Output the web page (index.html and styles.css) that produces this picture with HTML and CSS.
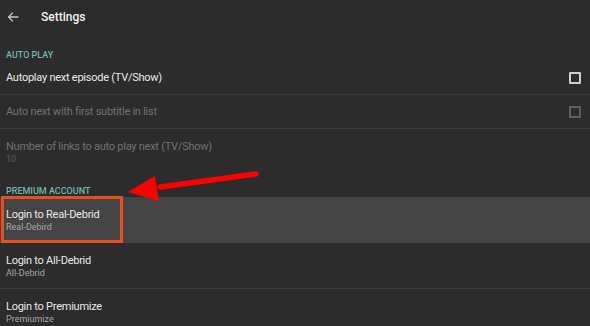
FILE: index.html
```html
<!DOCTYPE html>
<html>
<head>
<meta charset="utf-8">
<link rel="stylesheet" href="styles.css">
</head>
<body>
<div class="screen">
  <header class="topbar">
    <svg class="back" width="12" height="10" viewBox="0 0 12 10"><path d="M11 5H1.5M5.5 1L1.5 5l4 4" fill="none" stroke="#c4c4c4" stroke-width="1.3" stroke-linecap="round" stroke-linejoin="round"/></svg>
    <span class="title">Settings</span>
  </header>

  <div class="cat cat-first">AUTO PLAY</div>
  <div class="row single">
    <span class="t">Autoplay next episode (TV/Show)</span>
    <span class="check"></span>
  </div>
  <div class="row single disabled">
    <span class="t">Auto next with first subtitle in list</span>
    <span class="check"></span>
  </div>
  <div class="row double disabled last">
    <span class="t">Number of links to auto play next (TV/Show)</span>
    <span class="s">10</span>
  </div>

  <div class="cat">PREMIUM ACCOUNT</div>
  <div class="row double active">
    <span class="t">Login to Real-Debrid</span>
    <span class="s">Real-Debird</span>
  </div>
  <div class="row double">
    <span class="t">Login to All-Debrid</span>
    <span class="s">All-Debrid</span>
  </div>
  <div class="row double">
    <span class="t">Login to Premiumize</span>
    <span class="s">Premiumize</span>
  </div>

  <div class="mark"></div>
  <svg class="arrow" width="140" height="34" viewBox="0 0 140 34">
    <path d="M128 3 L32 16" stroke="#ff0000" stroke-width="5.5" stroke-linecap="round" fill="none"/>
    <path d="M0 21 L27 5 L31 30 Z" fill="#ff0000"/>
  </svg>
</div>
</body>
</html>
```
FILE: styles.css
```css
html, body {
  margin: 0;
  padding: 0;
  background: #2c2c2c;
}
.screen {
  position: relative;
  width: 590px;
  height: 326px;
  overflow: hidden;
  background: #2c2c2c;
  font-family: Roboto, "Noto Sans", sans-serif;
  display: flex;
  flex-direction: column;
}
.topbar {
  height: 33px;
  flex: 0 0 33px;
  display: flex;
  align-items: center;
  padding-left: 7px;
}
.back {
  display: block;
}
.title {
  margin-left: 22px;
  color: #f2f2f2;
  font-size: 12px;
  font-weight: 500;
}
.cat {
  color: #6fb7ae;
  font-size: 9px;
  font-weight: 500;
  line-height: 12px;
  padding: 10px 6px 0;
  height: 12px;
  flex: 0 0 auto;
}
.cat-first {
  padding-top: 16px;
}
.row {
  flex: 0 0 auto;
  box-sizing: border-box;
  padding: 0 6px;
  border-bottom: 1px solid #3b3b3b;
  display: flex;
}
.row.last {
  border-bottom: none;
}
.row.single {
  height: 34px;
  align-items: center;
  justify-content: space-between;
}
.row.double {
  height: 46px;
  flex-direction: column;
  padding-top: 11px;
}
.row.active {
  background: #444444;
  border-bottom-color: #444444;
}
.t {
  color: #e8e8e8;
  font-size: 11px;
  line-height: 13px;
  letter-spacing: -0.25px;
}
.s {
  color: #a6a6a6;
  font-size: 9px;
  line-height: 12px;
}
.disabled .t {
  color: #717171;
}
.disabled .s {
  color: #5c5c5c;
}
.check {
  width: 8px;
  height: 8px;
  border: 2px solid #d0d0d0;
  border-radius: 1px;
  margin-right: 3px;
}
.disabled .check {
  border-color: #5e5e5e;
}
.mark {
  position: absolute;
  left: 1px;
  top: 196px;
  width: 116px;
  height: 41px;
  border: 3px solid #e94e1f;
}
.arrow {
  position: absolute;
  left: 128px;
  top: 171px;
}
```
